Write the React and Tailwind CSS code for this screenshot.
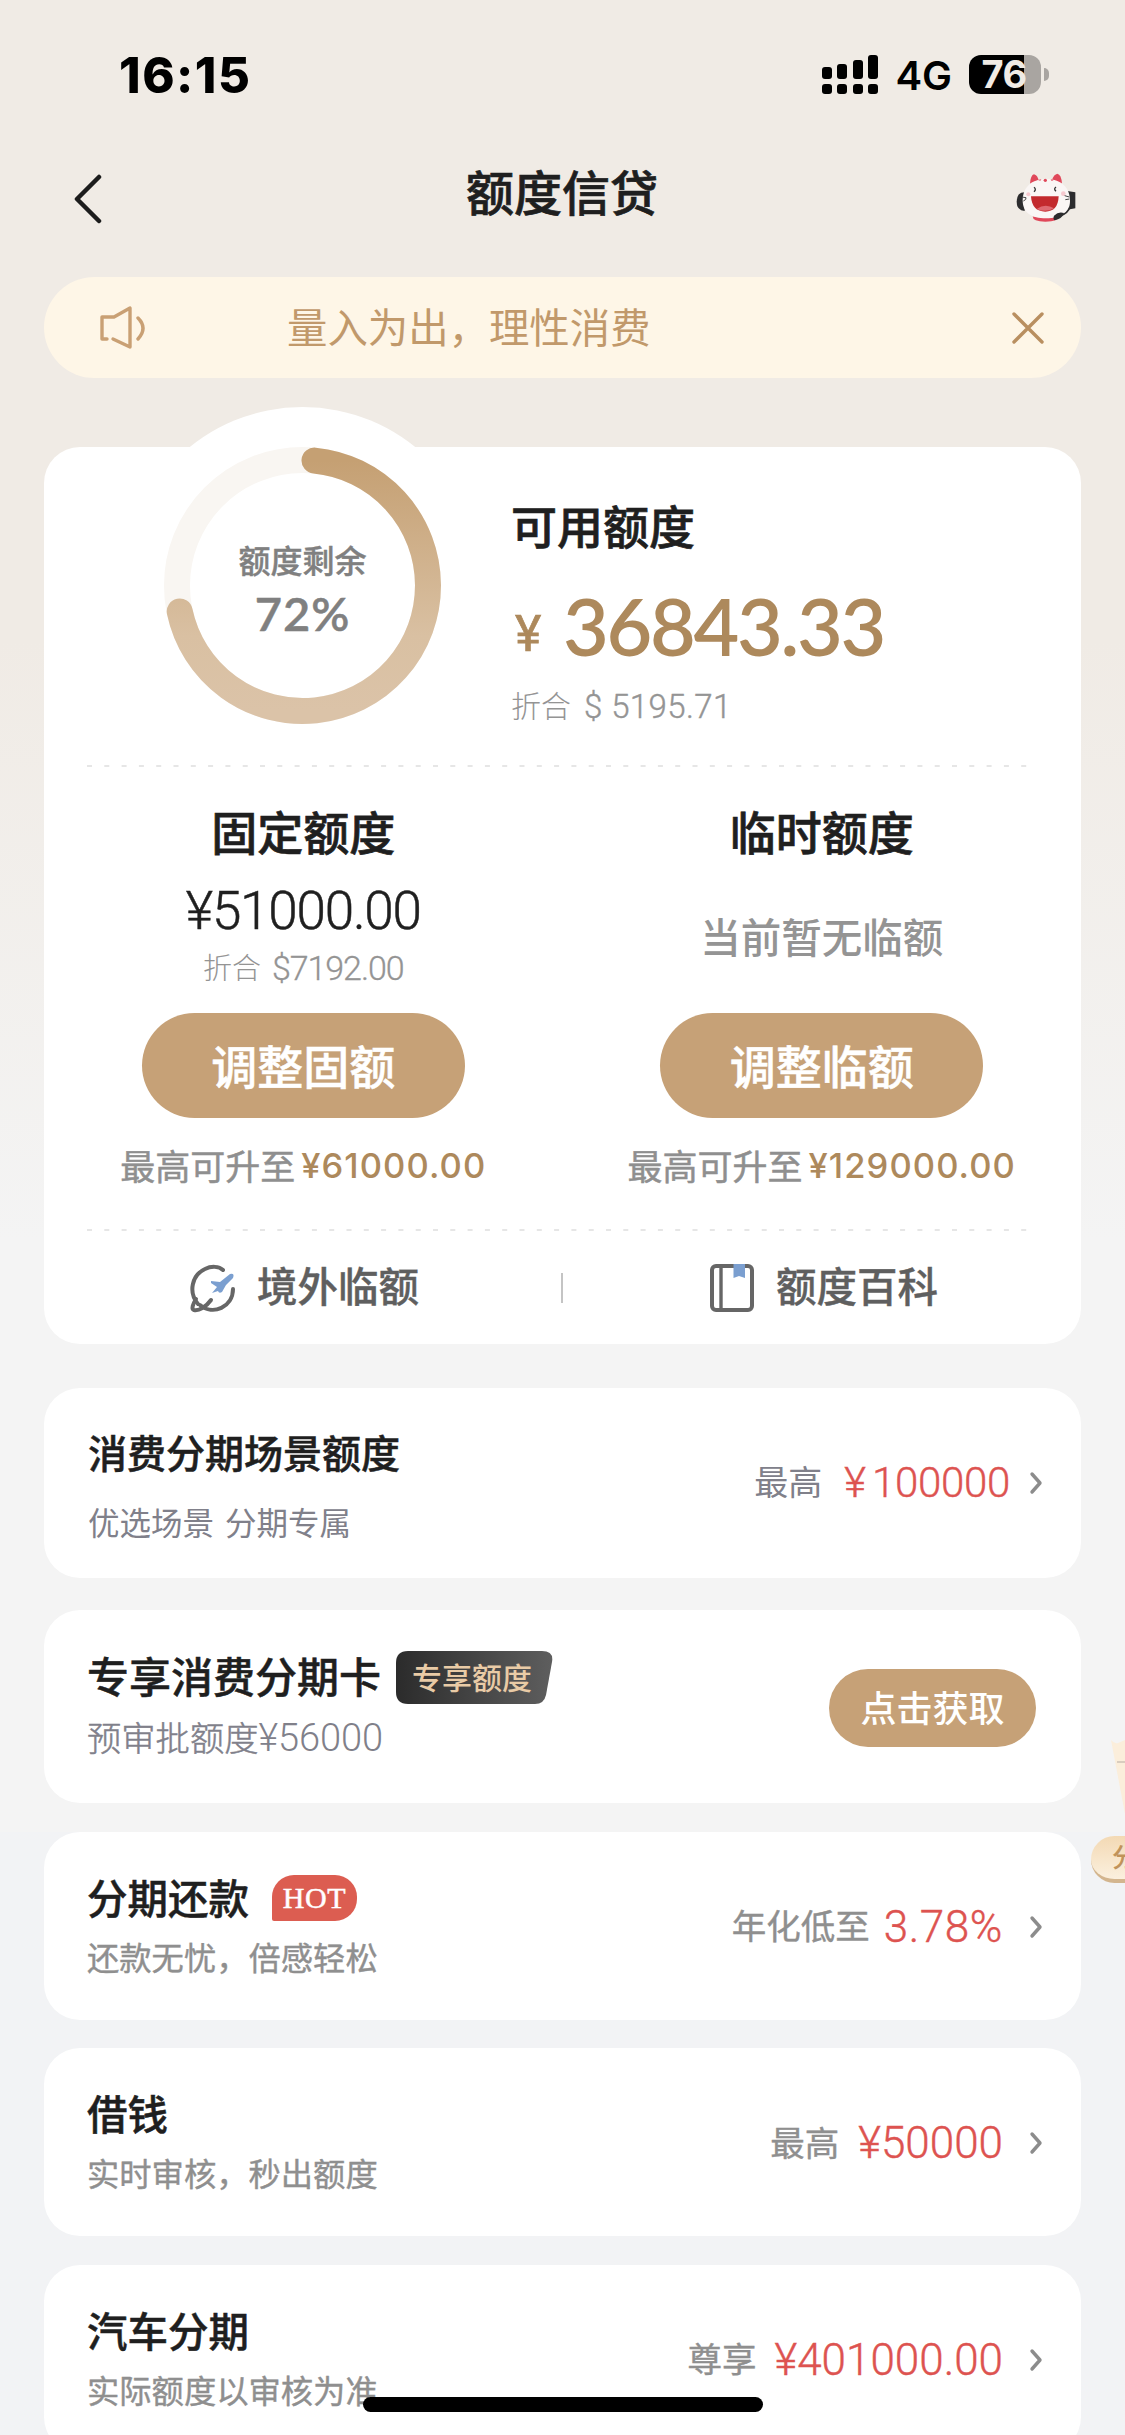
import React from 'react';

const offers = [
  {
    title: '分期还款',
    hot: true,
    desc: '还款无忧，倍感轻松',
    label: '年化低至',
    value: '3.78%',
    valueClass: 'ml-[14px] tracking-[0.6px]',
  },
  {
    title: '借钱',
    desc: '实时审核，秒出额度',
    label: '最高',
    value: '¥50000',
    valueClass: 'ml-[19px]',
  },
  {
    title: '汽车分期',
    desc: '实际额度以审核为准',
    label: '尊享',
    value: '¥401000.00',
    valueClass: 'ml-[18px]',
  },
];

const StatusBar = () => (
  <div className="flex h-[149px] items-center justify-between pl-[119px] pr-[76px] text-black">
    <span className="mt-[1px] font-['Inter'] text-[49px] font-extrabold leading-none tracking-[1.5px]">16:15</span>
    <div className="flex items-center">
      <svg className="mr-[15px] h-[40px] w-[58px]" viewBox="0 0 58 40">
        <rect x="0" y="12" width="10" height="12" rx="3" />
        <rect x="15" y="9" width="10" height="15" rx="3" />
        <rect x="31" y="5" width="10" height="19" rx="3" />
        <rect x="46" y="0" width="10" height="24" rx="3" />
        <rect x="0" y="29" width="10" height="10" rx="3" />
        <rect x="15" y="29" width="10" height="10" rx="3" />
        <rect x="31" y="29" width="10" height="10" rx="3" />
        <rect x="46" y="29" width="10" height="10" rx="3" />
      </svg>
      <span className="mr-[17px] mt-[3px] font-['Inter'] text-[40px] font-semibold leading-none">4G</span>
      <div className="flex h-[39px] w-[72px] rounded-[12px] bg-[linear-gradient(90deg,#000_76%,#a9a5a1_76%)]">
        <span className="w-[69px] pl-[1px] text-center font-['Inter'] text-[38px] font-bold leading-[39px] tracking-[-0.5px] text-[#f0ebe5]">
          76
        </span>
      </div>
      <div className="ml-[3px] h-[13px] w-[5px] rounded-r-full bg-[#a9a5a1]" />
    </div>
  </div>
);

const Mascot = () => (
  <svg className="h-[50px] w-[60px]" viewBox="650 395 180 150">
    <path d="M692 430 Q694 404 704 402 Q714 404 718 420 Z" fill="#e0485a" />
    <path d="M788 430 Q786 402 774 400 Q764 402 758 418 Z" fill="#e0485a" />
    <path d="M676 456 Q652 456 652 484 Q652 510 676 512 Z" fill="#2c2c2e" />
    <path d="M804 452 L828 456 V504 L804 508 Z" fill="#2c2c2e" />
    <path d="M700 528 H778 Q778 544 738 544 Q700 544 700 528 Z" fill="#e0485a" />
    <path d="M740 416 C790 416 812 446 812 482 C812 518 784 534 740 534 C696 534 670 518 670 480 C670 444 694 416 740 416 Z" fill="#faf6f5" />
    <path d="M716 419 l10 -2 l-3 4 z M754 417 l9 2 l-6 3 z" fill="#e0485a" />
    <circle cx="738" cy="420" r="5" fill="#e0485a" />
    <circle cx="687" cy="462" r="6" fill="#f6c9cf" />
    <circle cx="792" cy="460" r="7" fill="#f6c9cf" />
    <path d="M704 441 q8 6 0 13 M770 440 q-8 6 0 13" fill="none" stroke="#333" strokeWidth="4" />
    <path d="M668 470 l12 2 q2 6 -8 10 M796 466 l14 4 M798 478 l12 -2" fill="none" stroke="#444" strokeWidth="3" />
    <path d="M695 468 H778 Q776 514 738 514 Q698 514 695 468 Z" fill="#c32a2e" />
    <path d="M712 506 Q738 488 764 504 Q740 518 712 506 Z" fill="#de6a72" />
    <path d="M812 500 Q806 518 784 526" fill="none" stroke="#2c2c2e" strokeWidth="5" />
    <path d="M764 526 q14 -14 30 -8 q-6 18 -28 22 q-6 -4 -2 -14 Z" fill="#2c2c2e" />
  </svg>
);

const Header = () => (
  <div className="flex h-[128px] items-start justify-between pl-[72px] pr-[49px]">
    <svg className="mt-[25px] h-[50px] w-[60px]" viewBox="0 0 60 50" fill="none" stroke="#1c1c1c" strokeWidth="4.5" strokeLinecap="round" strokeLinejoin="round">
      <path d="M27 3 L5 25 L27 47" />
    </svg>
    <h1 className="mr-[24px] mt-[17px] text-[48px] font-medium leading-none text-[#1f1f1f] [-webkit-text-stroke:0.7px]">额度信贷</h1>
    <div className="mt-[23px]">
      <Mascot />
    </div>
  </div>
);

const Notice = () => (
  <div className="mx-[44px] flex h-[101px] items-center rounded-full bg-[#fef6e7] text-[#c1996b]">
    <svg className="ml-[54px] h-[50px] w-[50px]" viewBox="0 0 50 50" fill="none" stroke="#c9a074" strokeWidth="3.4" strokeLinecap="round" strokeLinejoin="round">
      <path d="M9 36 H4 V14 H16 L32 5 V44 L15 36" />
      <path d="M40 15 Q50 25 40 36" />
    </svg>
    <span className="mb-[3px] ml-[139px] flex-1 text-[40.4px] font-normal leading-none">量入为出，理性消费</span>
    <svg className="mr-[36px] h-[34px] w-[34px]" viewBox="0 0 34 34" stroke="#b98f60" strokeWidth="3.4" strokeLinecap="round">
      <path d="M3 3 L31 31 M31 3 L3 31" />
    </svg>
  </div>
);

const Dashes = () => (
  <svg className="ml-[43px] block h-[2px] w-[942px]" viewBox="0 0 942 2">
    <path d="M0 1 H942" stroke="#e6e6e6" strokeWidth="2" strokeDasharray="5 12.3" />
  </svg>
);

const Ring = () => (
  <div className="relative -mt-[40px] ml-[80px] h-[357px] w-[357px] shrink-0">
    <svg className="h-full w-full" viewBox="-178.5 -178.5 357 357" fill="none">
      <defs>
        <linearGradient id="ring" gradientUnits="userSpaceOnUse" x1="0" y1="-125" x2="0" y2="125">
          <stop offset="0" stopColor="#c5a073" />
          <stop offset="0.7" stopColor="#d9c0a2" />
          <stop offset="1" stopColor="#dbc3a8" />
        </linearGradient>
      </defs>
      <circle r="178.5" fill="#fff" />
      <circle r="125.5" stroke="#f9f6f2" strokeWidth="26" />
      <path d="M12 -124.9 A125.5 125.5 0 1 1 -122.8 26" stroke="url(#ring)" strokeWidth="26" strokeLinecap="round" />
    </svg>
    <div className="absolute inset-0 flex flex-col items-center pt-[136px] leading-none text-[#808080]">
      <span className="text-[32px] font-medium [-webkit-text-stroke:0.4px]">额度剩余</span>
      <span className="mt-[15px] font-['Lato'] text-[47px] font-semibold tracking-[1px] [-webkit-text-stroke:0.5px]">72%</span>
    </div>
  </div>
);

const Available = () => (
  <div className="flex h-[318px]">
    <Ring />
    <div className="ml-[30px] flex flex-col pt-[54px] leading-none">
      <h2 className="text-[46px] font-medium text-[#1f1f1f] [-webkit-text-stroke:0.7px]">可用额度</h2>
      <div className="mt-[38px] flex h-[80px] items-center text-[#ad895c]">
        <span className="ml-[4px] mt-[18px] w-[48px] font-['Roboto'] text-[50px] [-webkit-text-stroke:0.7px]">¥</span>
        <span className="font-['Lato'] text-[79px] font-semibold tracking-[-2.3px]">36843.33</span>
      </div>
      <div className="mt-[24px] flex items-center text-[#949494]">
        <span className="mb-[4px] text-[30px] font-light">折合</span>
        <span className="ml-[13px] font-['Roboto'] text-[33px] font-light tracking-[0.4px] [-webkit-text-stroke:0.4px]">$ 5195.71</span>
      </div>
    </div>
  </div>
);

const AdjustButton = ({ children }) => (
  <button className="h-[105px] w-[323px] rounded-full bg-[#c6a177] pb-[4px] text-[46px] font-medium leading-none text-white [-webkit-text-stroke:0.5px]">
    {children}
  </button>
);

const MaxQuota = ({ amount }) => (
  <div className="mt-[29px] flex items-center leading-none">
    <span className="mb-[3px] text-[35px] font-normal text-[#8f8f8f] [-webkit-text-stroke:0.5px]">最高可升至</span>
    <span className="ml-[6px] font-['Inter'] text-[34.5px] font-medium tracking-[1.1px] text-[#ad895c]">{amount}</span>
  </div>
);

const QuotaColumns = () => (
  <div className="grid h-[462px] grid-cols-2 pt-[40px] leading-none">
    <div className="flex flex-col items-center">
      <h3 className="text-[46px] font-medium text-[#1f1f1f] [-webkit-text-stroke:0.7px]">固定额度</h3>
      <span className="mt-[32px] font-['Roboto'] text-[53px] font-light tracking-[-1.2px] text-[#1f1f1f] [-webkit-text-stroke:0.5px]">¥51000.00</span>
      <div className="mt-[14px] flex h-[32px] items-center text-[#949494]">
        <span className="mb-[4px] text-[29px] font-light">折合</span>
        <span className="ml-[11px] font-['Roboto'] text-[34px] font-light tracking-[-1.1px] [-webkit-text-stroke:0.3px]">$7192.00</span>
      </div>
      <div className="mt-[29px]">
        <AdjustButton>调整固额</AdjustButton>
      </div>
      <MaxQuota amount="¥61000.00" />
    </div>
    <div className="flex flex-col items-center">
      <h3 className="text-[46px] font-medium text-[#1f1f1f] [-webkit-text-stroke:0.7px]">临时额度</h3>
      <span className="mt-[63px] text-[40.5px] font-medium text-[#949494]">当前暂无临额</span>
      <div className="mt-[56.5px]">
        <AdjustButton>调整临额</AdjustButton>
      </div>
      <MaxQuota amount="¥129000.00" />
    </div>
  </div>
);

const PlaneIcon = () => (
  <svg className="h-[50px] w-[50px]" viewBox="0 0 50 50" fill="none" strokeLinecap="round" strokeLinejoin="round">
    <path d="M34 7 C30 3 22 3 16 6 C3 12 -1 29 9 41" stroke="#666" strokeWidth="4" />
    <path d="M44 26 C44 44 24 53 11 42 M7 36 C4 41 2 46 5 47 C10 48 17 44 22 37" stroke="#666" strokeWidth="4" />
    <path d="M22 18 L31 19 L41 11 Q46 10 44 15 L37 22 L33 29 Q30 31 29 28 L23 30 L28 24 L22 20 Z" fill="#7b9fd0" />
  </svg>
);

const BookIcon = () => (
  <svg className="h-[50px] w-[46px]" viewBox="0 0 46 50" fill="none">
    <rect x="3" y="3" width="40" height="44" rx="4" stroke="#666" strokeWidth="4" />
    <path d="M12 3 V47" stroke="#666" strokeWidth="3.4" />
    <path d="M24.5 1 H36 V15 L30 13 L24.5 15 Z" fill="#7b9fd0" />
  </svg>
);

const Links = () => (
  <div className="flex h-[113px] items-center leading-none text-[#5f5f5f]">
    <div className="flex flex-1 items-center pl-[145px]">
      <PlaneIcon />
      <span className="mb-[4px] ml-[18px] text-[40.5px] font-medium [-webkit-text-stroke:0.4px]">境外临额</span>
    </div>
    <div className="h-[30px] w-[2px] bg-[#c4c4c4]" />
    <div className="flex flex-1 items-center pl-[146px]">
      <BookIcon />
      <span className="mb-[4px] ml-[21px] text-[40.5px] font-medium [-webkit-text-stroke:0.4px]">额度百科</span>
    </div>
  </div>
);

const Arrow = () => (
  <svg className="h-[24px] w-[14px]" viewBox="0 0 14 24" fill="none" stroke="#8c8c8c" strokeWidth="3.4" strokeLinecap="round" strokeLinejoin="round">
    <path d="M3 3 L11 12 L3 21" />
  </svg>
);

const SceneCard = () => (
  <div className="mt-[44px] flex h-[190px] items-center justify-between rounded-[36px] bg-white pl-[44px] pr-[38px] leading-none">
    <div className="flex flex-col self-start pt-[44px]">
      <h3 className="text-[39px] font-medium text-[#1f1f1f] [-webkit-text-stroke:0.5px]">消费分期场景额度</h3>
      <span className="mt-[35px] text-[31.5px] font-normal text-[#80808a] [word-spacing:4px]">优选场景 分期专属</span>
    </div>
    <div className="flex items-center">
      <span className="mb-[4px] text-[34px] font-normal text-[#80808a]">最高</span>
      <span className="ml-[22px] font-['Roboto'] text-[42px] font-light text-[#dd5350] [-webkit-text-stroke:0.5px]">¥</span>
      <span className="ml-[6px] mr-[19px] font-['Roboto'] text-[42px] font-light tracking-[-0.3px] text-[#dd5350] [-webkit-text-stroke:0.4px]">
        100000
      </span>
      <Arrow />
    </div>
  </div>
);

const InstallmentCard = () => (
  <div className="mt-[32px] flex h-[193px] items-center justify-between rounded-[36px] bg-white pl-[43px] pr-[45px] leading-none">
    <div className="flex flex-col self-start pt-[41px]">
      <div className="flex h-[53px] items-center">
        <h3 className="mb-[5px] text-[42px] font-medium text-[#1f1f1f] [-webkit-text-stroke:0.5px]">专享消费分期卡</h3>
        <div className="relative ml-[15px] flex h-[53px] w-[157px] items-center pl-[16px]">
          <svg className="absolute inset-0 h-full w-full" viewBox="0 0 157 53">
            <defs>
              <linearGradient id="tag" x1="0" x2="1">
                <stop offset="0" stopColor="#2b2b2b" />
                <stop offset="1" stopColor="#5e5e5e" />
              </linearGradient>
            </defs>
            <path d="M12 0 H146 Q158 0 156 11 L150 44 Q148 53 139 53 H12 Q0 53 0 41 V12 Q0 0 12 0 Z" fill="url(#tag)" />
          </svg>
          <span className="relative mb-[3px] text-[30px] font-medium text-[#e9cba6]">专享额度</span>
        </div>
      </div>
      <div className="mt-[15px] flex items-center text-[#80808a]">
        <span className="mb-[3px] text-[34.3px] font-light [-webkit-text-stroke:0.5px]">预审批额度</span>
        <span className="font-['Roboto'] text-[38px] font-light tracking-[-0.1px]">¥56000</span>
      </div>
    </div>
    <button className="mt-[2px] h-[78px] w-[207px] rounded-full bg-[#c6a177] pb-[4px] text-[36px] font-medium leading-none text-white">
      点击获取
    </button>
  </div>
);

const OfferCard = ({ offer }) => (
  <div className="mt-[28.5px] flex h-[188px] items-center justify-between rounded-[36px] bg-white pl-[43px] pr-[38px] leading-none">
    <div className="flex flex-col self-start pt-[45px]">
      <div className="flex h-[41px] items-center">
        <h3 className="text-[40.5px] font-medium text-[#1f1f1f] [-webkit-text-stroke:0.5px]">{offer.title}</h3>
        {offer.hot && (
          <span className="ml-[23px] mt-[1px] flex h-[46px] w-[85px] items-center justify-center rounded-[22px] rounded-bl-[2px] bg-[#dc5d51] font-['Liberation_Serif'] text-[30px] tracking-[0.6px] text-white [-webkit-text-stroke:0.5px]">
            HOT
          </span>
        )}
      </div>
      <span className="mt-[22px] text-[32.3px] font-normal text-[#8f8f8f] [-webkit-text-stroke:0.4px]">{offer.desc}</span>
    </div>
    <div className="mt-[2px] flex items-center">
      <span className="mb-[4px] text-[34.5px] font-normal text-[#8f8f8f] [-webkit-text-stroke:0.4px]">{offer.label}</span>
      <span className={`mr-[26px] font-['Roboto'] text-[44px] font-light text-[#dd5350] [-webkit-text-stroke:0.4px] ${offer.valueClass}`}>
        {offer.value}
      </span>
      <Arrow />
    </div>
  </div>
);

// promo widget that is docked half outside of the right edge
const FloatingPromo = () => (
  <div className="absolute left-[1090px] top-[1738px] h-[150px] w-[35px] overflow-hidden">
    <svg className="absolute left-[20px] top-0 h-[80px] w-[15px]" viewBox="0 0 15 80">
      <path d="M1 2 Q4 6 8 5 L15 2 V76 Z" fill="#fbeedb" />
      <path d="M7 24 H15" stroke="#d9cdbf" strokeWidth="2" />
    </svg>
    <div className="absolute left-[1px] top-[98px] h-[47px] w-[120px] rounded-full border-b-[4px] border-[#d3b58e] bg-gradient-to-b from-[#f3d9b4] to-[#fbf0de] pl-[21px] text-[26px] font-medium leading-[40px] text-[#c1935a]">
      分期
    </div>
  </div>
);

const App = () => (
  <div className="relative h-[2435px] w-[1125px] overflow-hidden bg-[linear-gradient(180deg,#f0ebe5_0px,#f0ebe5_640px,#f4f4f4_1240px,#f4f4f4_1832px,#f2f3f5_1832px)] font-['Noto_Sans_CJK_SC',sans-serif]">
    <StatusBar />
    <Header />
    <Notice />
    <div className="mx-[44px] mt-[69px]">
      <div className="h-[897px] rounded-[36px] bg-white">
        <Available />
        <Dashes />
        <QuotaColumns />
        <Dashes />
        <Links />
      </div>
      <SceneCard />
      <InstallmentCard />
      {offers.map((offer) => (
        <OfferCard key={offer.title} offer={offer} />
      ))}
    </div>
    <FloatingPromo />
    <div className="absolute left-[363px] top-[2397px] h-[15px] w-[400px] rounded-full bg-black" />
  </div>
);

export default App;
